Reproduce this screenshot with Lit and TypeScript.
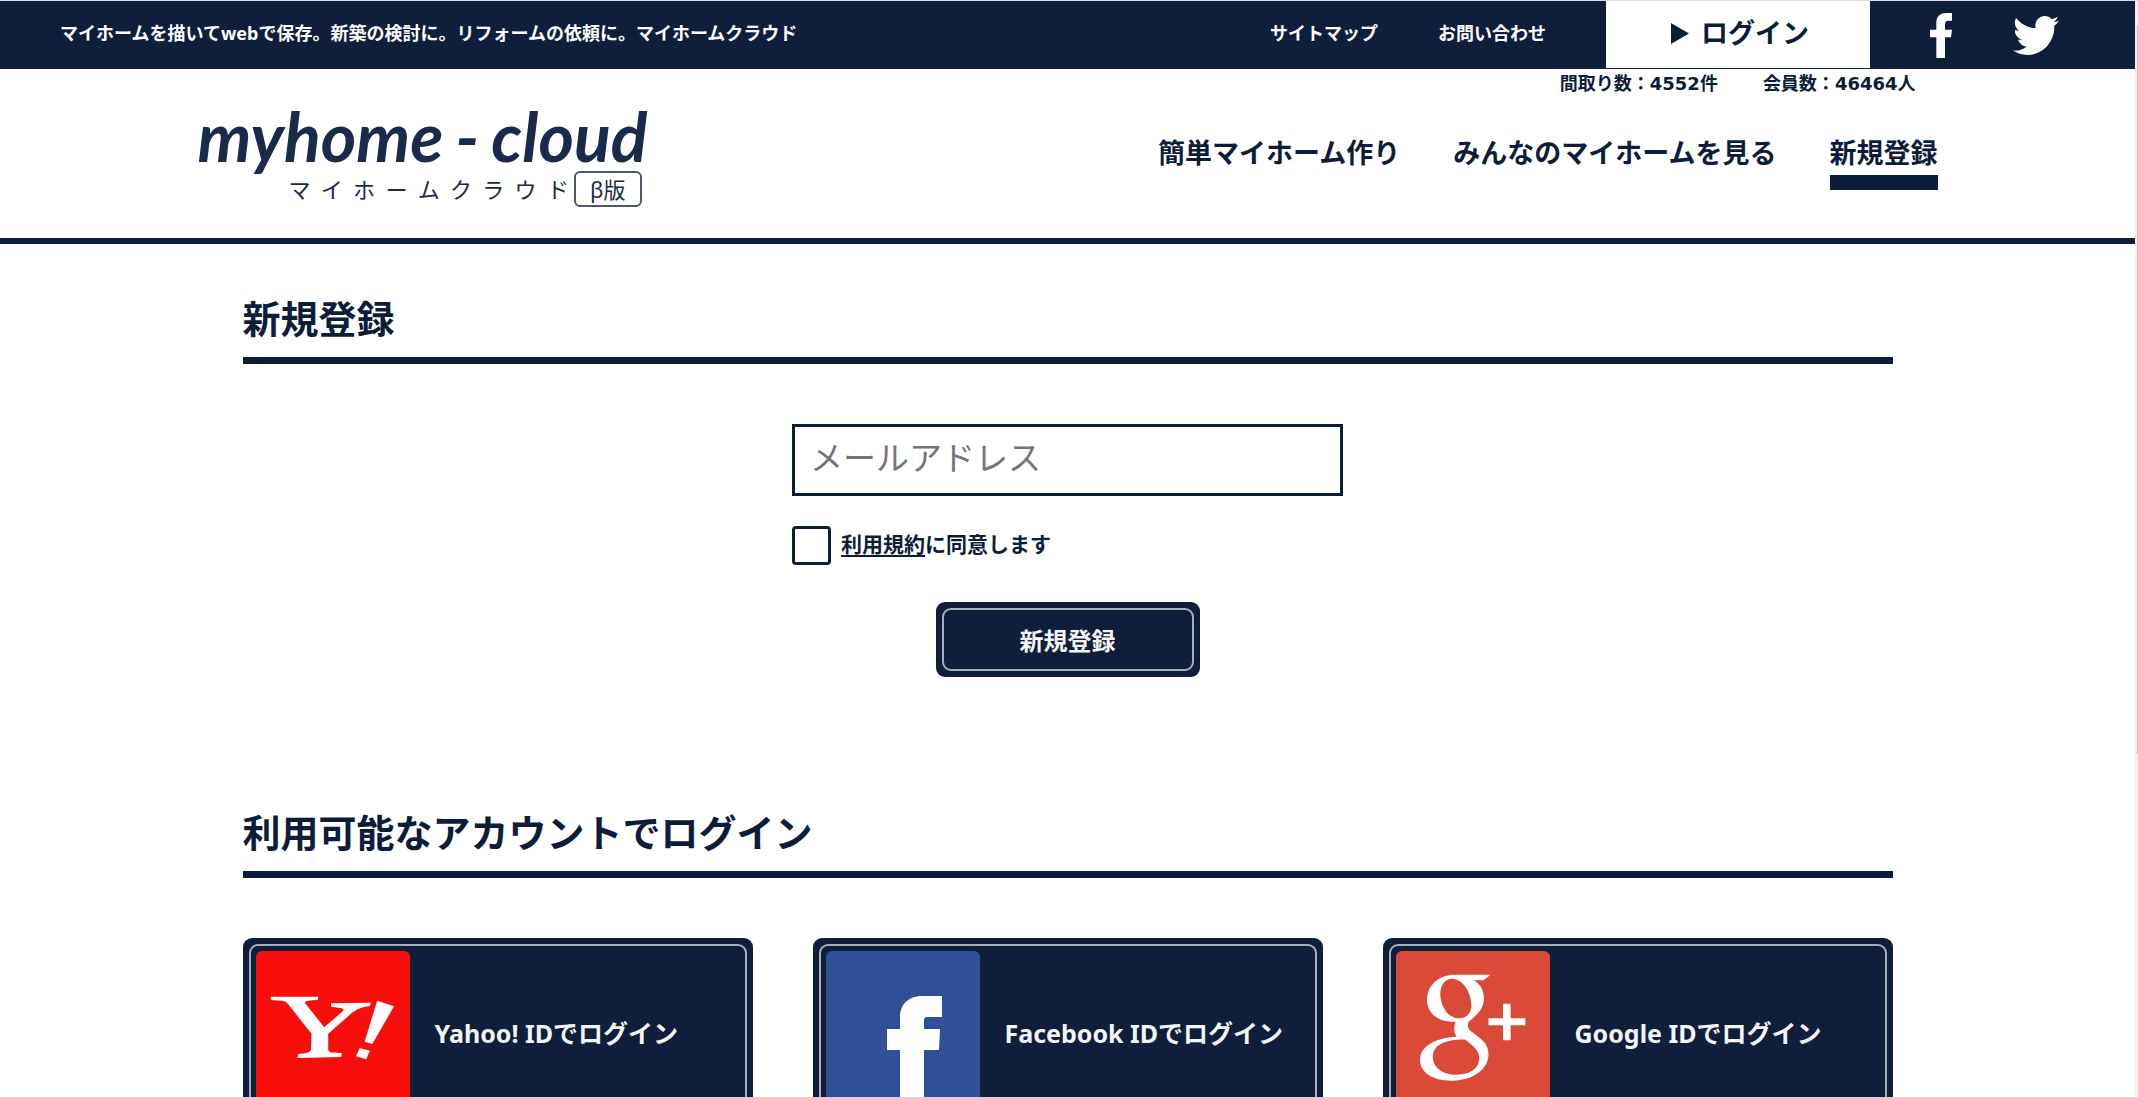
import { LitElement, html, css, svg } from "lit";
import { customElement } from "lit/decorators.js";

const yahooMark = svg`
  <path d="M14.7 45.7H62.4L61.6 49Q48 49 49 52L68.2 76.3L87 60Q89 57.6 84 57L75 55.7V52.3L114.7 51.7L113.9 55Q104 56 97 61L72.2 82.7V98Q72.2 101.3 76 101.6L85.7 102L85.3 106L41.6 107L42 103L49 102.2Q55 101.4 55 98L55.5 82.7L32 53Q30 50 26 49.7L14.7 49Z"/>
  <path d="M121.2 49.7L138 55.3L116.3 93L108.6 90.7ZM103.7 97L113.9 99.7L110.2 108.3L100 105.3Z"/>`;

const facebookMark = svg`
  <path d="M116 45H96C82 45 74 54 74 66V78H61V99H74V154H98V99H113L114 78H98V69Q98 66 101 66H116Z"/>`;

const googleMark = svg`
  <path fill-rule="evenodd" d="M94.6 23.7L87.5 29.3H78C84 33 87.9 39 87.9 47.3C87.9 57 82.5 62 76.8 67.3C73.5 70 71.8 71 71.8 74C71.8 77 73 79 76 81C85 88 92.5 92 92.5 103C92.5 119 76 129.7 55.4 129.7C36 129.7 24 121 24 109C24 95 40 86.5 60.7 85.7C58 82 57.5 76 59.6 70.7C42 71.5 31 62 31 49C31 34 43 23.7 59 23.7ZM56 27.7C49 27.7 44.3 34 44.3 43C44.3 55 52 67.3 62.5 67.3C71 67.3 75.4 62 75.4 54C75.4 42 67 27.7 56 27.7ZM64 88.5C47 89.5 36.8 95 36.8 105.7C36.8 116 46 123.7 60.7 123.7C75 123.7 83.2 117 83.2 107.3C83.2 99 77 95 69 88.5Z"/>
  <path d="M107 52.7H114.6V67.3H129.3V74.3H114.6V89.3H107V74.3H92.5V67.3H107Z"/>`;

const providers = [
  { id: "yahoo", label: "Yahoo! IDでログイン", mark: yahooMark },
  { id: "facebook", label: "Facebook IDでログイン", mark: facebookMark },
  { id: "google", label: "Google IDでログイン", mark: googleMark },
];

@customElement("site-logo")
class SiteLogo extends LitElement {
  static styles = css`
    :host {
      display: block;
      color: #192a4b;
    }
    .logo {
      display: flex;
      flex-direction: column;
      width: 450px;
      color: inherit;
      text-decoration: none;
    }
    .word {
      display: flex;
      justify-content: space-between;
      font-family: Lato, "Noto Sans", sans-serif;
      font-size: 68px;
      font-style: italic;
      font-weight: 700;
      line-height: 70px;
    }
    .sub {
      display: flex;
      align-items: center;
      gap: 5px;
      padding: 0 6px 0 91px;
      font-size: 22px;
      font-weight: 400;
      line-height: 32px;
    }
    .kana {
      display: flex;
      flex: 1;
      justify-content: space-between;
    }
    .beta {
      padding: 0 14px;
      border: 2px solid #4a5874;
      border-radius: 6px;
    }
  `;

  render() {
    return html`<a class="logo" href="#" aria-label="myhome-cloud マイホームクラウド β版">
      <span class="word"><span>myhome</span><span>-</span><span>cloud</span></span>
      <span class="sub">
        <span class="kana">${[..."マイホームクラウド"].map((c) => html`<span>${c}</span>`)}</span>
        <span class="beta">β版</span>
      </span>
    </a>`;
  }
}

@customElement("app-root")
class AppRoot extends LitElement {
  static styles = css`
    :host {
      --navy: #0f1e3a;
      --ink: #0c1d3b;
      display: flex;
      height: 100vh;
      box-sizing: border-box;
      border-top: 1px solid #d9dbde;
      background: #fff;
      color: var(--ink);
      font-family: "Noto Sans", "Noto Sans CJK JP", sans-serif;
      font-size: 18px;
      font-weight: 700;
    }
    * {
      box-sizing: border-box;
    }
    a {
      color: inherit;
      text-decoration: none;
    }
    .page {
      flex: 1;
      min-width: 0;
      overflow: hidden auto;
      scrollbar-width: none;
    }
    .track {
      width: 3px;
      padding: 25px 0 0 2px;
      background: #f1f1f1;
    }
    .thumb {
      height: 68%;
      background: #c1c1c1;
    }

    .topbar {
      display: flex;
      height: 68px;
      padding-left: 60px;
      background: var(--navy);
      color: #fff;
      line-height: 64px;
      white-space: nowrap;
    }
    .tagline {
      flex: 1;
      margin: 0;
    }
    .links {
      display: flex;
      gap: 60px;
      padding-right: 60px;
    }
    .login {
      display: flex;
      gap: 12px;
      align-items: center;
      justify-content: center;
      width: 264px;
      padding: 0 0 3px 4px;
      border-bottom: 1px solid var(--navy);
      background: #fff;
      color: var(--ink);
      font-size: 27px;
    }
    .social {
      display: flex;
      align-items: center;
      gap: 61px;
      padding: 0 76px 0 60px;
      fill: #fff;
    }
    .social a {
      display: flex;
    }

    .header {
      border-bottom: 6px solid var(--navy);
    }
    .header-inner {
      display: flex;
      justify-content: space-between;
      max-width: 1740px;
      margin: 0 auto;
      padding-bottom: 48px;
    }
    .logo {
      margin: 32px 0 -20px;
    }
    .stats {
      display: flex;
      justify-content: flex-end;
      gap: 45px;
      margin: 0 22px 34px 0;
      line-height: 28px;
    }
    .num {
      font-family: "DejaVu Sans", sans-serif;
      line-height: 1;
    }
    .nav {
      display: flex;
      gap: 53px;
      font-size: 27px;
      line-height: 44px;
    }
    .nav a {
      border-bottom: 15px solid transparent;
    }
    .nav .current {
      border-color: var(--ink);
    }

    .content {
      max-width: 1650px;
      margin: 0 auto;
      padding: 37px 0 40px;
    }
    .title {
      margin: 0 0 60px;
      border-bottom: 7px solid var(--ink);
      font-size: 38px;
      line-height: 75px;
      padding-bottom: 1px;
    }
    .form {
      display: flex;
      flex-direction: column;
      width: 551px;
      margin: 0 auto 118px;
    }
    .email {
      height: 72px;
      padding: 0 15px 6px;
      border: 3px solid var(--ink);
      border-radius: 0;
      background: #fff;
      color: var(--ink);
      font: 400 33px "Noto Sans", "Noto Sans CJK JP", sans-serif;
    }
    .email::placeholder {
      color: #757575;
    }
    .agree {
      display: flex;
      gap: 10px;
      margin: 30px 0 37px;
      font-size: 21px;
      line-height: 36px;
    }
    .agree a {
      text-decoration: underline 2px;
      text-underline-offset: 3px;
    }
    .check {
      appearance: none;
      width: 39px;
      height: 39px;
      margin: 0;
      border: 3px solid var(--ink);
      border-radius: 4px;
      background: #fff;
    }
    .check:checked {
      box-shadow: inset 0 0 0 6px #fff;
      background: var(--ink);
    }
    .framed {
      padding: 6px;
      border: 0;
      border-radius: 9px;
      background: var(--navy);
      color: #f4f5f6;
      font: inherit;
      font-size: 24px;
    }
    .frame {
      display: flex;
      align-items: center;
      justify-content: center;
      height: 100%;
      border: 2px solid #a9afb9;
      border-radius: 9px;
    }
    .submit {
      align-self: center;
      width: 264px;
      height: 75px;
      cursor: pointer;
    }
    .providers {
      display: grid;
      grid-template-columns: repeat(3, 1fr);
      gap: 60px;
    }
    .provider {
      font-size: 25px;
    }
    .provider .frame {
      justify-content: flex-start;
      gap: 25px;
      padding: 5px;
    }
    .tile {
      flex: none;
      width: 154px;
      height: 154px;
      border-radius: 6px;
      fill: #fff;
    }
    .yahoo {
      background: #f80f0c;
    }
    .facebook {
      background: #305097;
    }
    .google {
      background: #db4a39;
    }
    .caption {
      padding-top: 8px;
    }
  `;

  render() {
    return html`
      <div class="page">
        <div class="topbar">
          <p class="tagline">マイホームを描いてwebで保存。新築の検討に。リフォームの依頼に。マイホームクラウド</p>
          <div class="links">
            <a href="#">サイトマップ</a>
            <a href="#">お問い合わせ</a>
          </div>
          <a class="login" href="#">
            <svg width="18" height="21" viewBox="0 0 18 21" fill="currentColor" aria-hidden="true"><path d="M0 0L18 10.5L0 21Z" /></svg>
            ログイン
          </a>
          <div class="social">
            <a href="#" aria-label="Facebook">
              <svg width="22" height="45" viewBox="0 0 66 135"><path d="M66 0H50C30 0 19 10 19 30V50H0V73H19V135H45V73H63L66 50H45V34C45 26 49 23 56 23H66Z" /></svg>
            </a>
            <a href="#" aria-label="Twitter">
              <svg width="46" height="39" viewBox="0 2.2 24 19.6" preserveAspectRatio="none"><path d="M23.954 4.569c-.885.389-1.83.654-2.825.775 1.014-.611 1.794-1.574 2.163-2.723-.951.555-2.005.959-3.127 1.184-.896-.959-2.173-1.559-3.591-1.559-2.717 0-4.92 2.203-4.92 4.917 0 .39.045.765.127 1.124C7.691 8.094 4.066 6.13 1.64 3.161c-.427.722-.666 1.561-.666 2.475 0 1.71.87 3.213 2.188 4.096-.807-.026-1.566-.248-2.228-.616v.061c0 2.385 1.693 4.374 3.946 4.827-.413.111-.849.171-1.296.171-.314 0-.615-.03-.916-.086.631 1.953 2.445 3.377 4.604 3.417-1.68 1.319-3.809 2.105-6.102 2.105-.39 0-.779-.023-1.17-.067 2.189 1.394 4.768 2.209 7.557 2.209 9.054 0 13.999-7.496 13.999-13.986 0-.209 0-.42-.015-.63.961-.689 1.8-1.56 2.46-2.548l-.047-.02z" /></svg>
            </a>
          </div>
        </div>

        <header class="header">
          <div class="header-inner">
            <site-logo class="logo"></site-logo>
            <div>
              <div class="stats">
                <span>間取り数：<span class="num">4552</span>件</span>
                <span>会員数：<span class="num">46464</span>人</span>
              </div>
              <nav class="nav">
                <a href="#">簡単マイホーム作り</a>
                <a href="#">みんなのマイホームを見る</a>
                <a class="current" href="#" aria-current="page">新規登録</a>
              </nav>
            </div>
          </div>
        </header>

        <main class="content">
          <h2 class="title">新規登録</h2>
          <form class="form" @submit=${(e: Event) => e.preventDefault()}>
            <input class="email" type="email" placeholder="メールアドレス" aria-label="メールアドレス" />
            <div class="agree">
              <input class="check" id="agree" type="checkbox" />
              <label for="agree"><a href="#">利用規約</a>に同意します</label>
            </div>
            <button class="framed submit" type="submit"><span class="frame">新規登録</span></button>
          </form>

          <h2 class="title">利用可能なアカウントでログイン</h2>
          <div class="providers">
            ${providers.map(
              (p) => html`<a class="framed provider" href="#">
                <span class="frame">
                  <svg class="tile ${p.id}" viewBox="0 0 154 154" aria-hidden="true">${p.mark}</svg>
                  <span class="caption">${p.label}</span>
                </span>
              </a>`,
            )}
          </div>
        </main>
      </div>
      <div class="track" aria-hidden="true"><div class="thumb"></div></div>
    `;
  }
}
